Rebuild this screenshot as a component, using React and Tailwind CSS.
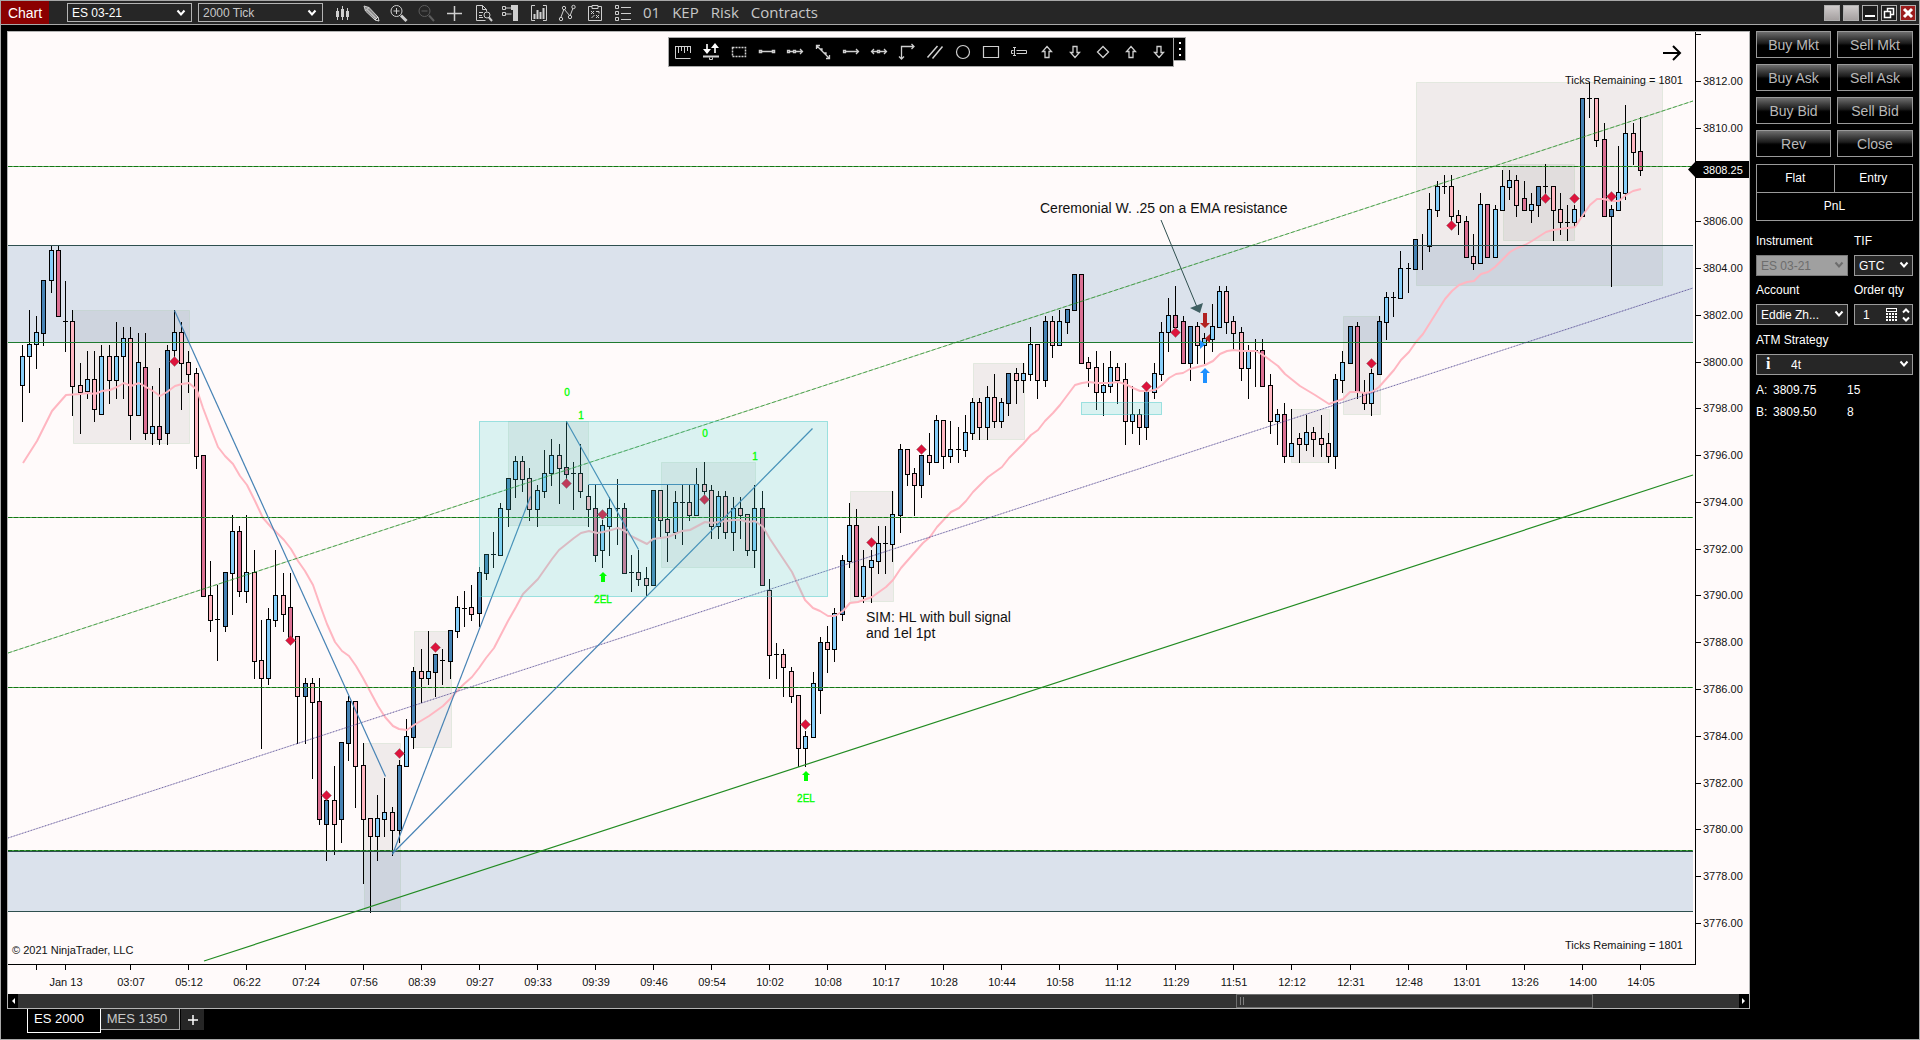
import React from 'react';

// ── Chart data ──
// One entry per bar: kind, high, body top, body bottom, low (plot y values).
// u/d = normal up/down, U/D = strong up/down, x = doji.
const BARS = `
u,345,356,385,421 u,310,344,356,392 u,316,332,344,368 U,280,280,333,345 u,246,250,280,292
D,246,250,316,316 x,281,321,321,351 d,310,321,386,415 d,363,385,392,433 u,351,379,391,398
d,351,379,409,421 u,345,356,414,414 d,345,356,380,403 u,322,356,380,398 u,327,338,356,398
d,327,338,415,439 u,333,362,415,415 D,333,367,433,439 u,386,426,433,444 D,368,426,439,444
U,345,350,433,444 u,310,332,350,356 d,322,332,363,409 d,351,362,374,392 d,368,373,456,468
D,455,455,596,596 d,561,595,620,631 x,585,619,619,660 U,572,572,626,631 u,515,531,573,614
D,526,531,591,596 u,515,572,591,602 d,550,572,661,678 d,620,660,678,748 u,608,619,678,684
u,550,595,620,626 d,573,595,614,631 D,573,607,637,640 d,636,636,696,743 U,678,683,696,743
d,678,683,702,778 D,678,701,819,824 U,800,800,824,860 d,766,800,824,854 U,742,742,819,842
U,696,701,743,760 d,701,701,766,807 d,743,765,819,883 d,818,818,836,912 u,795,818,836,860
u,778,812,819,836 d,807,812,830,855 U,760,765,830,842 u,719,736,766,766 U,667,671,737,748
d,649,671,678,702 u,631,671,678,684 U,654,654,672,696 x,649,660,660,684 U,630,630,661,678
u,596,607,631,637 x,591,608,608,626 d,585,607,614,620 U,567,572,613,626 U,554,554,573,579
x,532,554,554,567 u,503,508,555,555 U,478,478,509,526 u,456,461,479,497 d,456,461,479,491
d,468,478,509,520 u,485,490,509,526 u,450,473,491,497 u,439,455,473,485 d,444,455,468,503
D,421,467,474,478 x,462,473,473,509 d,444,473,491,497 d,485,496,509,526 D,485,508,555,561
u,520,525,550,567 u,497,508,526,555 x,479,508,508,544 D,503,508,573,573 x,555,572,572,591
d,550,572,579,585 d,567,578,585,596 U,490,490,585,585 d,490,490,520,537 d,485,519,532,561
u,491,502,532,538 x,485,502,502,544 d,485,502,515,520 u,468,484,515,515 d,462,484,491,494
d,485,490,526,538 u,491,496,526,538 d,491,496,532,538 u,497,508,532,550 d,497,508,515,538
d,514,514,550,555 u,485,508,550,567 D,491,508,585,585 d,579,590,655,678 x,643,654,654,678
d,649,654,667,696 d,667,671,696,702 d,695,695,748,766 u,731,736,748,766 u,672,683,737,737
U,637,642,690,713 d,626,642,649,672 u,608,613,649,661 U,555,560,614,620 u,503,525,561,567
D,509,525,596,596 u,550,566,596,602 u,550,560,567,602 u,526,543,561,573 x,526,543,543,573
u,491,514,544,561 U,444,449,515,532 d,449,449,474,485 d,468,473,485,515 U,455,455,485,497
d,433,455,462,474 u,415,420,462,462 d,420,420,456,468 u,421,449,456,462 x,427,449,449,462
u,415,432,450,456 u,398,402,433,439 d,398,402,427,439 u,386,397,427,439 d,374,397,421,427
u,398,402,421,427 U,373,373,403,415 d,368,373,380,403 u,363,373,380,392 u,327,344,374,380
d,344,344,380,398 U,316,321,380,386 d,316,321,345,357 u,310,321,345,345 U,309,309,322,333
U,274,274,310,310 D,274,274,363,363 d,357,362,368,386 d,351,367,392,409 u,363,385,392,415
u,351,367,386,392 d,363,367,380,403 d,363,379,421,444 u,386,414,421,433 d,409,414,427,444
U,391,391,427,439 u,363,373,392,398 u,322,332,374,380 u,298,315,332,351 D,286,315,327,327
D,316,321,363,363 U,326,326,363,380 d,322,326,345,363 u,333,338,345,363 u,304,326,339,351
u,286,291,327,327 d,286,291,322,333 d,316,321,333,350 d,327,332,368,380 u,345,350,368,398
x,339,350,350,386 D,339,350,386,386 d,374,385,421,433 u,409,414,421,444 D,403,414,456,462
u,409,443,456,456 d,433,438,444,462 u,415,432,444,450 d,427,432,439,456 d,415,438,444,456
d,433,443,456,462 U,374,379,456,468 u,351,362,380,392 U,326,326,363,363 D,322,326,392,398
d,380,392,403,409 u,369,373,403,415 U,316,321,374,374 u,292,297,322,339 x,292,297,297,316
u,251,268,298,298 x,263,268,268,292 U,239,239,269,269 x,234,245,245,269 u,193,209,246,251
u,181,186,210,216 x,175,186,186,193 d,175,186,216,220 d,210,215,222,234 D,216,221,257,257
d,234,256,263,269 u,193,204,263,263 D,204,204,257,257 u,205,209,257,257 u,170,186,210,210
u,170,180,187,199 d,175,180,205,216 D,181,198,210,210 u,193,204,210,222 U,186,186,205,216
x,164,186,186,193 d,186,186,210,240 d,193,209,222,234 x,205,222,222,240 u,205,209,222,227
U,98,98,216,216 x,82,98,98,117 d,98,98,140,146 D,123,139,216,216 U,205,209,216,286
u,146,192,210,210 u,105,133,193,199 d,123,133,152,164 D,117,151,170,175
`
  .trim()
  .split(/\s+/)
  .map((row, i) => {
    const [kind, ...ys] = row.split(',');
    const [high, top, bottom, low] = ys.map(Number);
    return { kind, high, top, bottom, low, x: barX(i) };
  });

const BAR_FILL = { u: '#87cefa', U: '#4682b4', d: '#ffb6c1', D: '#db7093' };

function barX(i) {
  return 22 + Math.floor(i * 7.257);
}

const EMA = `23,463 37,441 52,411 66,395 80,394 88,393 95,394 102,391 110,390 117,387 124,383 131,386
139,383 146,387 153,391 160,396 167,392 175,386 182,384 189,383 197,390 203,408 211,429 218,447
225,456 233,464 240,476 247,485 255,501 263,518 271,527 277,533 284,540 291,549 298,561 305,571
313,585 320,605 327,624 335,642 342,651 349,656 356,666 363,678 371,693 378,706 385,717 393,726
399,729 407,730 414,725 429,716 443,706 450,699 457,691 464,684 472,677 479,668 486,658 494,648
508,621 516,607 523,594 538,579 552,559 559,550 574,538 581,533 589,531 597,533 603,532 611,530
618,528 625,531 631,536 639,540 647,544 653,539 668,537 682,531 690,530 705,522 712,523 719,522
733,520 741,520 748,522 755,521 763,527 770,539 792,572 805,600 813,608 820,611 828,616 835,616
843,611 850,603 858,602 872,597 886,587 893,580 901,568 915,552 923,543 930,537 937,527 951,512
959,508 966,501 973,492 988,477 995,472 1002,467 1009,458 1016,451 1023,444 1031,435 1038,430
1045,421 1053,413 1060,405 1075,385 1082,383 1089,382 1097,383 1110,383 1118,382 1125,384 1133,388
1140,391 1148,391 1155,390 1162,385 1169,378 1176,374 1183,373 1190,369 1205,365 1213,361 1220,354
1227,351 1234,350 1241,351 1256,351 1263,355 1278,366 1285,374 1300,386 1315,395 1329,404 1343,399
1350,392 1357,392 1365,393 1372,392 1379,387 1387,378 1394,370 1401,360 1409,352 1416,342 1423,334
1445,299 1452,291 1459,285 1467,282 1474,281 1481,274 1488,272 1495,267 1510,252 1517,248 1525,245
1532,241 1546,232 1553,230 1575,227 1583,215 1590,205 1597,199 1604,199 1611,201 1619,201 1626,195
1633,191 1641,189`;

// [x1, y1, x2, y2]
const RANGES = [
  [73, 310, 189, 443],
  [414, 631, 451, 747],
  [364, 743, 400, 911],
  [508, 421, 588, 525],
  [661, 462, 755, 567],
  [850, 491, 893, 601],
  [973, 363, 1024, 439],
  [1291, 409, 1329, 462],
  [1343, 316, 1380, 414],
  [1416, 82, 1662, 285],
  [1503, 164, 1574, 240],
];

const DIAMONDS = [
  [174, 361], [290, 640], [326, 795], [399, 753], [435, 647], [566, 483], [602, 514], [704, 499],
  [805, 724], [871, 542], [921, 449], [1146, 386], [1175, 332], [1371, 363], [1451, 225],
  [1545, 198], [1574, 198], [1611, 196],
];

const TREND_LINES = [
  [174, 310, 385, 776],
  [392, 854, 530, 496],
  [392, 853, 812, 428],
  [566, 421, 638, 549],
  [588, 484, 697, 484],
];

const LAST_PRICE = 3808.25;
const PRICES = Array.from({ length: 20 }, (_, i) => 3814 - i * 2);
const priceY = (p) => Math.floor(81.4 + (3812 - p) * 23.39);

const TIMES = [
  [2, ''], [6, 'Jan 13'], [15, '03:07'],
  ...[
    '05:12', '06:22', '07:24', '07:56', '08:39', '09:27', '09:33', '09:39', '09:46', '09:54',
    '10:02', '10:08', '10:17', '10:28', '10:44', '10:58', '11:12', '11:29', '11:51', '12:12',
    '12:31', '12:48', '13:01', '13:26', '14:00', '14:05',
  ].map((t, k) => [23 + k * 8, t]),
];

// ── Chart layers ──
function Candles() {
  return (
    <g shapeRendering="crispEdges">
      {BARS.map((b) => (
        <g key={b.x}>
          <rect x={b.x} y={b.high} width="1" height={b.low - b.high + 1} fill="#000" />
          {b.kind === 'x' ? (
            <rect x={b.x - 2} y={b.top} width="5" height="1" fill="#000" />
          ) : (
            <>
              <rect x={b.x - 2} y={b.top} width="5" height={b.bottom - b.top + 1} fill="#000" />
              <rect
                x={b.x - 1}
                y={b.top + 1}
                width="3"
                height={b.bottom - b.top - 1}
                fill={BAR_FILL[b.kind]}
              />
            </>
          )}
        </g>
      ))}
    </g>
  );
}

function Level({ y }) {
  return (
    <g>
      <line x1="8" x2="1693" y1={y + 0.5} y2={y + 0.5} stroke="#4aa84a" />
      <line x1="8" x2="1693" y1={y + 0.5} y2={y + 0.5} stroke="#157315" strokeDasharray="4 2" />
    </g>
  );
}

function EntryMark({ x, y }) {
  return (
    <g fill="#00ff00">
      <path d={`M${x} ${y - 5}l4 4h-2v6h-4v-6h-2z`} />
      <text x={x} y={y + 26} fontSize="10" textAnchor="middle" stroke="#00ff00" strokeWidth="0.3">
        2EL
      </text>
    </g>
  );
}

function PriceChart() {
  return (
    <svg
      viewBox="8 32 1741 962"
      className="block w-full bg-[#fffafa] font-['Liberation_Sans',Arial,sans-serif]"
      role="img"
      aria-label="ES 03-21 2000 Tick"
    >
      {/* Supply and demand zones */}
      <g fill="#dbe2ec">
        <rect x="8" y="245" width="1685" height="97" />
        <rect x="8" y="851" width="1685" height="60" />
      </g>
      {RANGES.map(([x1, y1, x2, y2]) => (
        <rect
          key={x1}
          x={x1 + 0.5}
          y={y1 + 0.5}
          width={x2 - x1}
          height={y2 - y1}
          fill="#000"
          fillOpacity="0.06"
          stroke="#8fbc8f"
          strokeOpacity="0.2"
        />
      ))}

      <Candles />

      <polyline points={EMA} fill="none" stroke="#ffb6c1" strokeWidth="2" strokeLinejoin="round" />

      {/* Horizontal levels */}
      <g stroke="#2f4f4f">
        <line x1="8" x2="1693" y1="245.5" y2="245.5" />
        <line x1="8" x2="1693" y1="851.5" y2="851.5" />
        <line x1="8" x2="1693" y1="911.5" y2="911.5" />
      </g>
      <line x1="8" x2="1693" y1="342.5" y2="342.5" stroke="#1f7a2f" />
      <Level y={166} />
      <Level y={517} />
      <Level y={687} />
      <Level y={850} />

      {/* Channel lines */}
      <line x1="8" y1="653" x2="1693" y2="101" stroke="#228b22" strokeOpacity="0.35" />
      <line x1="8" y1="653" x2="1693" y2="101" stroke="#228b22" strokeOpacity="0.7" strokeDasharray="4 2" />
      <line x1="204" y1="961" x2="1693" y2="475" stroke="#228b22" strokeWidth="1.2" />
      <line x1="8" y1="838" x2="1693" y2="288" stroke="#483d8b" strokeOpacity="0.35" />
      <line x1="8" y1="838" x2="1693" y2="288" stroke="#483d8b" strokeOpacity="0.7" strokeDasharray="1 2" />

      {TREND_LINES.map(([x1, y1, x2, y2]) => (
        <line
          key={`${x1}-${y1}`}
          x1={x1 + 0.5}
          y1={y1 + 0.5}
          x2={x2 + 0.5}
          y2={y2 + 0.5}
          stroke="#4682b4"
          strokeWidth="1.2"
        />
      ))}

      {DIAMONDS.map(([x, y]) => (
        <path
          key={x}
          d={`M${x + 0.5} ${y - 4.5}l5 5l-5 5l-5 -5z`}
          fill="#dc143c"
          stroke="#808080"
          strokeOpacity="0.6"
          strokeWidth="0.8"
        />
      ))}

      {/* Highlighted areas */}
      <g fill="#48d1cc" fillOpacity="0.2" stroke="#48c9c9" strokeOpacity="0.5">
        <rect x="479.5" y="421.5" width="348" height="175" />
        <rect x="1081.5" y="402.5" width="80" height="12" />
      </g>

      <g fill="#00ff00" fontSize="10" textAnchor="middle" stroke="#00ff00" strokeWidth="0.3">
        <text x="567" y="396">0</text>
        <text x="581" y="419">1</text>
        <text x="705" y="437">0</text>
        <text x="755" y="460">1</text>
      </g>
      <EntryMark x={603} y={577} />
      <EntryMark x={806} y={776} />

      {/* Executions */}
      <path d="M1203 313h4v10h3l-5 5l-5 -5h3z" fill="#b22222" />
      <path d="M1203 383h4v-10h3l-5 -5l-5 5h3z" fill="#1e90ff" />
      <path d="M1210 334v9l-5 -4.500z" fill="#b22222" />
      <path d="M1200 340v9l5 -4.500z" fill="#1e90ff" />

      {/* Notes */}
      <line x1="1161" y1="220" x2="1197" y2="307" stroke="#2f4f4f" />
      <path d="M1190 308l13 -5l-3 10z" fill="#3f5f62" />
      <g fill="#111" fontSize="14">
        <text x="1040" y="213">Ceremonial W. .25 on a EMA resistance</text>
        <text x="866" y="622">SIM: HL with bull signal</text>
        <text x="866" y="638">and 1el 1pt</text>
      </g>
      <g fill="#111" fontSize="11">
        <text x="1565" y="84">Ticks Remaining = 1801</text>
        <text x="1565" y="949">Ticks Remaining = 1801</text>
        <text x="12" y="954">© 2021 NinjaTrader, LLC</text>
      </g>
      <path d="M1663 53h17M1673 46l7 7l-7 7" fill="none" stroke="#000" strokeWidth="2" />

      {/* Price axis */}
      <path d="M1695.5 32V964.500M8 964.500H1696" stroke="#000" fill="none" />
      {PRICES.map((p) => (
        <g key={p} shapeRendering="crispEdges">
          <rect x="1696" y={priceY(p)} width="5" height="1" />
          {/* the price marker covers its nearest label */}
          {p < 3814 && Math.abs(p - LAST_PRICE) > 0.5 && (
            <text x="1703" y={priceY(p) + 4} fontSize="11" fill="#111">
              {p.toFixed(2)}
            </text>
          )}
        </g>
      ))}
      <path d="M1688 169.500l8 -8.500h53v17h-53z" fill="#000" />
      <text x="1703" y="174" fontSize="11" fill="#fff">
        {LAST_PRICE.toFixed(2)}
      </text>

      {/* Time axis */}
      {TIMES.map(([i, label]) => (
        <g key={i}>
          <rect x={barX(i)} y="965" width="1" height="5" />
          <text x={barX(i) + 1} y="986" fontSize="11" fill="#111" textAnchor="middle">
            {label}
          </text>
        </g>
      ))}
    </svg>
  );
}

// ── Icons ──
function Icon({ children, dim }) {
  return (
    <svg
      viewBox="0 0 20 20"
      className={`block h-5 w-5 fill-none ${dim ? 'stroke-[#5c5c5c]' : 'stroke-[#cfcfcf]'}`}
    >
      {children}
    </svg>
  );
}

const MENU_ICONS = [
  {
    name: 'Chart style',
    art: (
      <>
        <path d="M4.500 5v12M9.500 3v14M14.500 5v12" />
        <path d="M3 8h3v6H3zM8 6h3v8H8zM13 8h3v6h-3z" fill="#cfcfcf" stroke="none" />
      </>
    ),
  },
  {
    name: 'Drawing tools',
    art: (
      <>
        <path d="M3 3l5 1.500L17 14l-3 3L4.500 8z" fill="#8d8d8d" />
        <path d="M5 7.500l3-3M6.500 7l8.500 8.500M14 17l3-3l1 4z" stroke="#e0e0e0" />
      </>
    ),
  },
  {
    name: 'Zoom in',
    art: (
      <>
        <circle cx="7.500" cy="8" r="5.500" />
        <path d="M7.500 5v6M4.500 8h6" />
        <path d="M12 12.500l5.500 5.500" strokeWidth="3" />
      </>
    ),
  },
  {
    name: 'Zoom out',
    dim: true,
    art: (
      <>
        <circle cx="7.500" cy="8" r="5.500" />
        <path d="M4.500 8h6" />
        <path d="M12 12.500l5 5.500" strokeWidth="2" />
      </>
    ),
  },
  { name: 'Crosshair', art: <path d="M9.500 3v15M2 10.500h15" strokeWidth="1.500" /> },
  {
    name: 'Data box',
    art: (
      <>
        <path d="M13.500 6.500l-4-4h-6v15h9M9.500 2.500v4h4v2M6 9.500h4M6 12.500h3M6 14.500h4" />
        <circle cx="14" cy="12" r="3" />
        <path d="M16 14.500l3 3.500" strokeWidth="2" />
      </>
    ),
  },
  {
    name: 'Chart trader',
    art: (
      <>
        <path d="M10 2h7v16h-5V7h-2z" fill="#cfcfcf" stroke="none" />
        <path d="M1.500 3.500h3v3h-3zM1.500 9.500h3v3h-3zM4.500 5h6M4.500 11h6" />
      </>
    ),
  },
  {
    name: 'Data series',
    art: (
      <>
        <path d="M6 2.500H2.500v15H6M14 2.500h3.500v15H14" />
        <path d="M5.500 11v5M8.500 7v9M11.500 9v7M14.500 5v11" strokeWidth="2" />
      </>
    ),
  },
  {
    name: 'Indicators',
    art: (
      <>
        <path d="M4 14l3-8l6 7l3-8" />
        <circle cx="4" cy="16" r="1.700" />
        <circle cx="7" cy="5" r="1.700" />
        <circle cx="13" cy="14" r="1.700" />
        <circle cx="16.500" cy="4" r="1.700" />
      </>
    ),
  },
  {
    name: 'Strategies',
    art: (
      <>
        <path d="M7 3.500H3.500v14h13v-14H13M7 2.500h6v3H7z" />
        <path d="M6 8l3 3M9 8l-3 3M11 12l3 3M14 12l-3 3M6.500 15l3-3M11 8.500h3v2" />
      </>
    ),
  },
  {
    name: 'Properties',
    art: (
      <path d="M2.500 2.500h3v3h-3zM2.500 8.500h3v3h-3zM2.500 14.500h3v3h-3zM8 4.500h10M8 10.500h10M8 16.500h10" />
    ),
  },
];

const UP = 'M10 4.500l4.500 5h-2.500v6H8v-6H5.500z';
const DOWN = 'M10 15.500l4.500-5h-2.500v-6H8v6H5.500z';

const DRAW_TOOLS = [
  { name: 'Ruler', art: <path d="M2.500 4v12.500h15M2 4.500h16M5.500 5v6M8.500 5v4M11.500 5v6M14.500 5v4M17.500 5v6" /> },
  {
    name: 'Risk reward',
    art: (
      <>
        <path d="M6 2v7M14 11V4M2 14.500h16" strokeWidth="2" />
        <path d="M2 7h8l-4 5zM10 6h8l-4-5z" fill="#fff" stroke="none" />
        <path d="M8.500 15.500v2h3v-2" />
      </>
    ),
  },
  { name: 'Region highlight', art: <path d="M3.500 5.500h13v9h-13z" strokeWidth="1.500" strokeDasharray="2 1" /> },
  { name: 'Line', art: <path d="M2.500 8.500h2v2h-2zM15.500 8.500h2v2h-2zM4.500 9.500h11" strokeWidth="1.500" /> },
  { name: 'Extended line', art: <path d="M2.500 8.500h2v2h-2zM8.500 8.500h2v2h-2zM4.500 9.500h4M10.500 9.500h7M15 7l2.500 2.500L15 12" strokeWidth="1.300" /> },
  { name: 'Arrow line', art: <path d="M3.500 3.500l13 13M3.500 7v-3.500H7M13 16.500h3.500V13M7 7h2v2M11 11h2v2" strokeWidth="1.300" /> },
  { name: 'Ray', art: <path d="M2.500 8.500h2v2h-2zM4.500 9.500h13M15 7l2.500 2.500L15 12" strokeWidth="1.300" /> },
  { name: 'Horizontal line', art: <path d="M2.500 9.500h6M5 7L2.500 9.500L5 12M8.500 8.500h2v2h-2zM10.500 9.500h7M15 7l2.500 2.500L15 12" strokeWidth="1.300" /> },
  { name: 'Path', art: <path d="M4.500 17V4.500H17M2 14.500L4.500 17L7 14.500M14.500 2L17 4.500L14.500 7" strokeWidth="1.300" /> },
  { name: 'Channel', art: <path d="M2.500 15.500L12.500 4M7.500 16.500L17.500 4.500" strokeWidth="1.500" /> },
  { name: 'Ellipse', art: <circle cx="10" cy="10" r="6.500" strokeWidth="1.200" /> },
  { name: 'Rectangle', art: <path d="M2.500 4.500h15v11h-15z" strokeWidth="1.200" /> },
  { name: 'Text', art: <path d="M4 5.500h3M5.500 6v8M4 13.500h3M2.500 8.500v3M2.500 8.500h2M2.500 11.500h2M7.500 8.500h10v3h-10" /> },
  { name: 'Arrow up', art: <path d={UP} strokeWidth="1.300" /> },
  { name: 'Arrow down', art: <path d={DOWN} strokeWidth="1.300" /> },
  { name: 'Diamond', art: <path d="M10 4.500l5.500 5.500l-5.500 5.500l-5.500-5.500z" strokeWidth="1.300" /> },
  { name: 'Marker up', art: <path d={UP} strokeWidth="1.300" /> },
  { name: 'Marker down', art: <path d={DOWN} strokeWidth="1.300" /> },
];

function Chevron({ className }) {
  return (
    <svg viewBox="0 0 10 8" className={`pointer-events-none absolute h-2 w-2.5 fill-none stroke-2 ${className}`}>
      <path d="M1.500 1.500L5 5.500L8.500 1.500" />
    </svg>
  );
}

// ── Controls ──
function ToolbarSelect({ label, value, tone }) {
  return (
    <div className="relative mr-1.5">
      <select
        aria-label={label}
        className={`block h-[19px] w-[125px] appearance-none border border-[#b4b4b4] bg-[#262626] pl-1 text-xs leading-4 ${tone}`}
      >
        <option>{value}</option>
      </select>
      <Chevron className="right-1.5 top-1.5 stroke-white" />
    </div>
  );
}

function PanelSelect({ id, label, value, disabled, className }) {
  return (
    <div className={className}>
      <label htmlFor={id} className="block h-[22px] leading-4">
        {label}
      </label>
      <div className="relative">
        <select
          id={id}
          disabled={disabled}
          className="block h-[21px] w-full appearance-none border border-[#9a9a9a] bg-[#262626] pl-1 text-white disabled:border-[#7a7a7a] disabled:bg-[#a0a0a0] disabled:text-[#6d6d6d] disabled:opacity-100"
        >
          <option>{value}</option>
        </select>
        <Chevron className={`right-1 top-1.5 ${disabled ? 'stroke-[#6d6d6d]' : 'stroke-white'}`} />
      </div>
    </div>
  );
}

function TitleBar() {
  return (
    <header className="flex h-6 items-center border-b border-[#a8a8a8] bg-[#262626] text-[#c8c8c8]">
      <div className="flex h-full w-12 items-center justify-center bg-[#8b0000] text-sm text-white">
        Chart
      </div>
      <div className="ml-[18px] flex">
        <ToolbarSelect label="Instrument" value="ES 03-21" tone="text-white" />
        <ToolbarSelect label="Interval" value="2000 Tick" tone="text-[#c8c8c8]" />
      </div>
      <div className="ml-1 flex gap-2">
        {MENU_ICONS.map((icon) => (
          <button key={icon.name} type="button" aria-label={icon.name}>
            <Icon dim={icon.dim}>{icon.art}</Icon>
          </button>
        ))}
      </div>
      <nav className="ml-2.5 flex gap-3 font-['Open_Sans',sans-serif] text-[15px]">
        {['01', 'KEP', 'Risk', 'Contracts'].map((item) => (
          <button key={item} type="button">
            {item}
          </button>
        ))}
      </nav>
      <div className="ml-auto mr-[3px] flex gap-[3px]">
        <button type="button" aria-label="Link instrument" className="h-4 w-4 border border-[#b0b0b0] bg-linear-to-b from-[#d0cccc] to-[#a5a0a0]" />
        <button type="button" aria-label="Link interval" className="h-4 w-4 border border-[#b0b0b0] bg-linear-to-b from-[#d0cccc] to-[#a5a0a0]" />
        <button type="button" aria-label="Minimize" className="h-4 w-4 border border-[#b0b0b0] bg-[#1c1c1c]">
          <svg viewBox="0 0 14 14" className="block">
            <path d="M2 9h10v2H2z" fill="#fff" />
          </svg>
        </button>
        <button type="button" aria-label="Restore" className="h-4 w-4 border border-[#b0b0b0] bg-[#1c1c1c]">
          <svg viewBox="0 0 14 14" className="block fill-none stroke-white" strokeWidth="1.500">
            <path d="M5.500 5V2.500h6v6H9M2.500 5.500h6v6h-6z" />
          </svg>
        </button>
        <button type="button" aria-label="Close" className="h-4 w-4 border border-[#b0b0b0] bg-[#9c1c1c]">
          <svg viewBox="0 0 14 14" className="block stroke-white" strokeWidth="3">
            <path d="M3 3l8 8M11 3l-8 8" />
          </svg>
        </button>
      </div>
    </header>
  );
}

function DrawingToolbar() {
  return (
    <div className="absolute left-[660px] top-[5px] flex items-start">
      <div className="flex h-[30px] items-center border border-[#a8a8a8] bg-black">
        {DRAW_TOOLS.map((tool) => (
          <button key={tool.name} type="button" aria-label={tool.name} className="px-1">
            <Icon>{tool.art}</Icon>
          </button>
        ))}
      </div>
      <button
        type="button"
        aria-label="Move toolbar"
        className="flex h-6 w-3 flex-col items-center justify-center gap-1 border border-l-0 border-[#a8a8a8] bg-black"
      >
        <span className="h-0.5 w-0.5 bg-white" />
        <span className="h-0.5 w-0.5 bg-white" />
        <span className="h-0.5 w-0.5 bg-white" />
      </button>
    </div>
  );
}

function ChartScrollbar() {
  return (
    <div className="flex h-3.5 items-stretch bg-[#333]">
      <button type="button" aria-label="Scroll left" className="flex w-2.5 items-center justify-center bg-black">
        <svg viewBox="0 0 4 6" className="h-1.5 w-1 fill-white">
          <path d="M4 0v6L1 3z" />
        </svg>
      </button>
      <div className="ml-auto mr-[146px] flex w-[357px] gap-0.5 border border-[#707070] px-[3px] py-0.5">
        <span className="w-px bg-[#808080]" />
        <span className="w-px bg-[#808080]" />
      </div>
      <button type="button" aria-label="Scroll right" className="flex w-2.5 items-center justify-center bg-black">
        <svg viewBox="0 0 4 6" className="h-1.5 w-1 fill-white">
          <path d="M0 0v6l3-3z" />
        </svg>
      </button>
    </div>
  );
}

const ORDER_BUTTONS = ['Buy Mkt', 'Sell Mkt', 'Buy Ask', 'Sell Ask', 'Buy Bid', 'Sell Bid', 'Rev', 'Close'];

function OrderPanel() {
  return (
    <aside className="w-[157px] shrink-0 text-xs text-white">
      <div className="grid grid-cols-[75px_76px] gap-1.5">
        {ORDER_BUTTONS.map((label) => (
          <button
            key={label}
            type="button"
            className="h-[27px] border border-[#9a9a9a] bg-linear-to-b from-[#6e6e6e] via-[#1c1c1c] via-45% to-black to-60% text-sm text-[#b8b8b8]"
          >
            {label}
          </button>
        ))}
      </div>

      <div className="mt-[7px] grid grid-cols-2 border border-[#9a9a9a] text-center leading-[27px]">
        <div className="border-r border-[#9a9a9a]">Flat</div>
        <div>Entry</div>
        <div className="col-span-2 border-t border-[#9a9a9a]">PnL</div>
      </div>

      <div className="mt-3 flex gap-1.5">
        <PanelSelect id="instrument" label="Instrument" value="ES 03-21" disabled className="w-[92px]" />
        <PanelSelect id="tif" label="TIF" value="GTC" className="w-[59px]" />
      </div>

      <div className="mt-1.5 flex gap-1.5">
        <PanelSelect id="account" label="Account" value="Eddie Zh..." className="w-[92px]" />
        <div className="w-[59px]">
          <label htmlFor="qty" className="block h-[22px] leading-4">
            Order qty
          </label>
          <div className="flex h-[21px] items-center border border-[#9a9a9a] bg-[#262626]">
            <input id="qty" defaultValue="1" className="w-[31px] min-w-0 bg-transparent pl-2" />
            <svg viewBox="0 0 12 13" className="h-[13px] w-3 fill-white">
              <path d="M0 0h11v4H0zM0 5h2v2H0zM3 5h2v2H3zM6 5h2v2H6zM9 5h2v2H9zM0 8h2v2H0zM3 8h2v2H3zM6 8h2v2H6zM9 8h2v2H9zM0 11h2v2H0zM3 11h2v2H3zM6 11h2v2H6zM9 11h2v2H9z" />
              <path d="M1 1h9v2H1z" fill="#262626" />
            </svg>
            <svg viewBox="0 0 8 14" className="ml-1 h-3.5 w-2 fill-none stroke-white stroke-2">
              <path d="M1 4.500l3-3l3 3M1 9.500l3 3l3-3" />
            </svg>
          </div>
        </div>
      </div>

      <label htmlFor="atm" className="mt-[7px] block h-[22px] leading-4">
        ATM Strategy
      </label>
      <div className="relative">
        <select
          id="atm"
          className="block h-[21px] w-full appearance-none border border-[#9a9a9a] bg-[#262626] pl-[34px] text-white"
        >
          <option>4t</option>
        </select>
        <span className="pointer-events-none absolute left-2.5 top-0.5 font-['Liberation_Serif',serif] text-base font-bold leading-4">
          i
        </span>
        <Chevron className="right-1 top-1.5 stroke-white" />
      </div>

      <dl className="mt-1 grid grid-cols-[17px_74px_1fr] leading-[22px]">
        <dt>A:</dt>
        <dd>3809.75</dd>
        <dd>15</dd>
        <dt>B:</dt>
        <dd>3809.50</dd>
        <dd>8</dd>
      </dl>
    </aside>
  );
}

function ChartTabs() {
  return (
    <div className="ml-5 flex items-start text-[13px] text-[#c8c8c8]">
      <button type="button" className="h-6 w-[74px] border border-t-0 border-white bg-black pb-1 pr-2.5 text-white">
        ES 2000
      </button>
      <button type="button" className="h-[21px] w-[79px] border border-t-0 border-l-0 border-[#a8a8a8] bg-[#262626] pr-1.5">
        MES 1350
      </button>
      <button type="button" aria-label="New tab" className="ml-px flex h-[21px] w-[23px] items-center justify-center bg-[#262626]">
        <svg viewBox="0 0 10 10" className="h-2.5 w-2.5 stroke-white" strokeWidth="1.500">
          <path d="M5 0v10M0 5h10" />
        </svg>
      </button>
    </div>
  );
}

export default function App() {
  return (
    <div className="flex min-h-screen flex-col border border-[#a8a8a8] bg-black font-['Liberation_Sans',Arial,sans-serif]">
      <TitleBar />
      <main className="flex flex-1 items-start gap-1.5 px-1.5 pt-1.5">
        <div className="min-w-0 flex-1">
          <div className="relative border border-[#b4b4b4]">
            <PriceChart />
            <DrawingToolbar />
            <ChartScrollbar />
          </div>
          <ChartTabs />
        </div>
        <OrderPanel />
      </main>
    </div>
  );
}
